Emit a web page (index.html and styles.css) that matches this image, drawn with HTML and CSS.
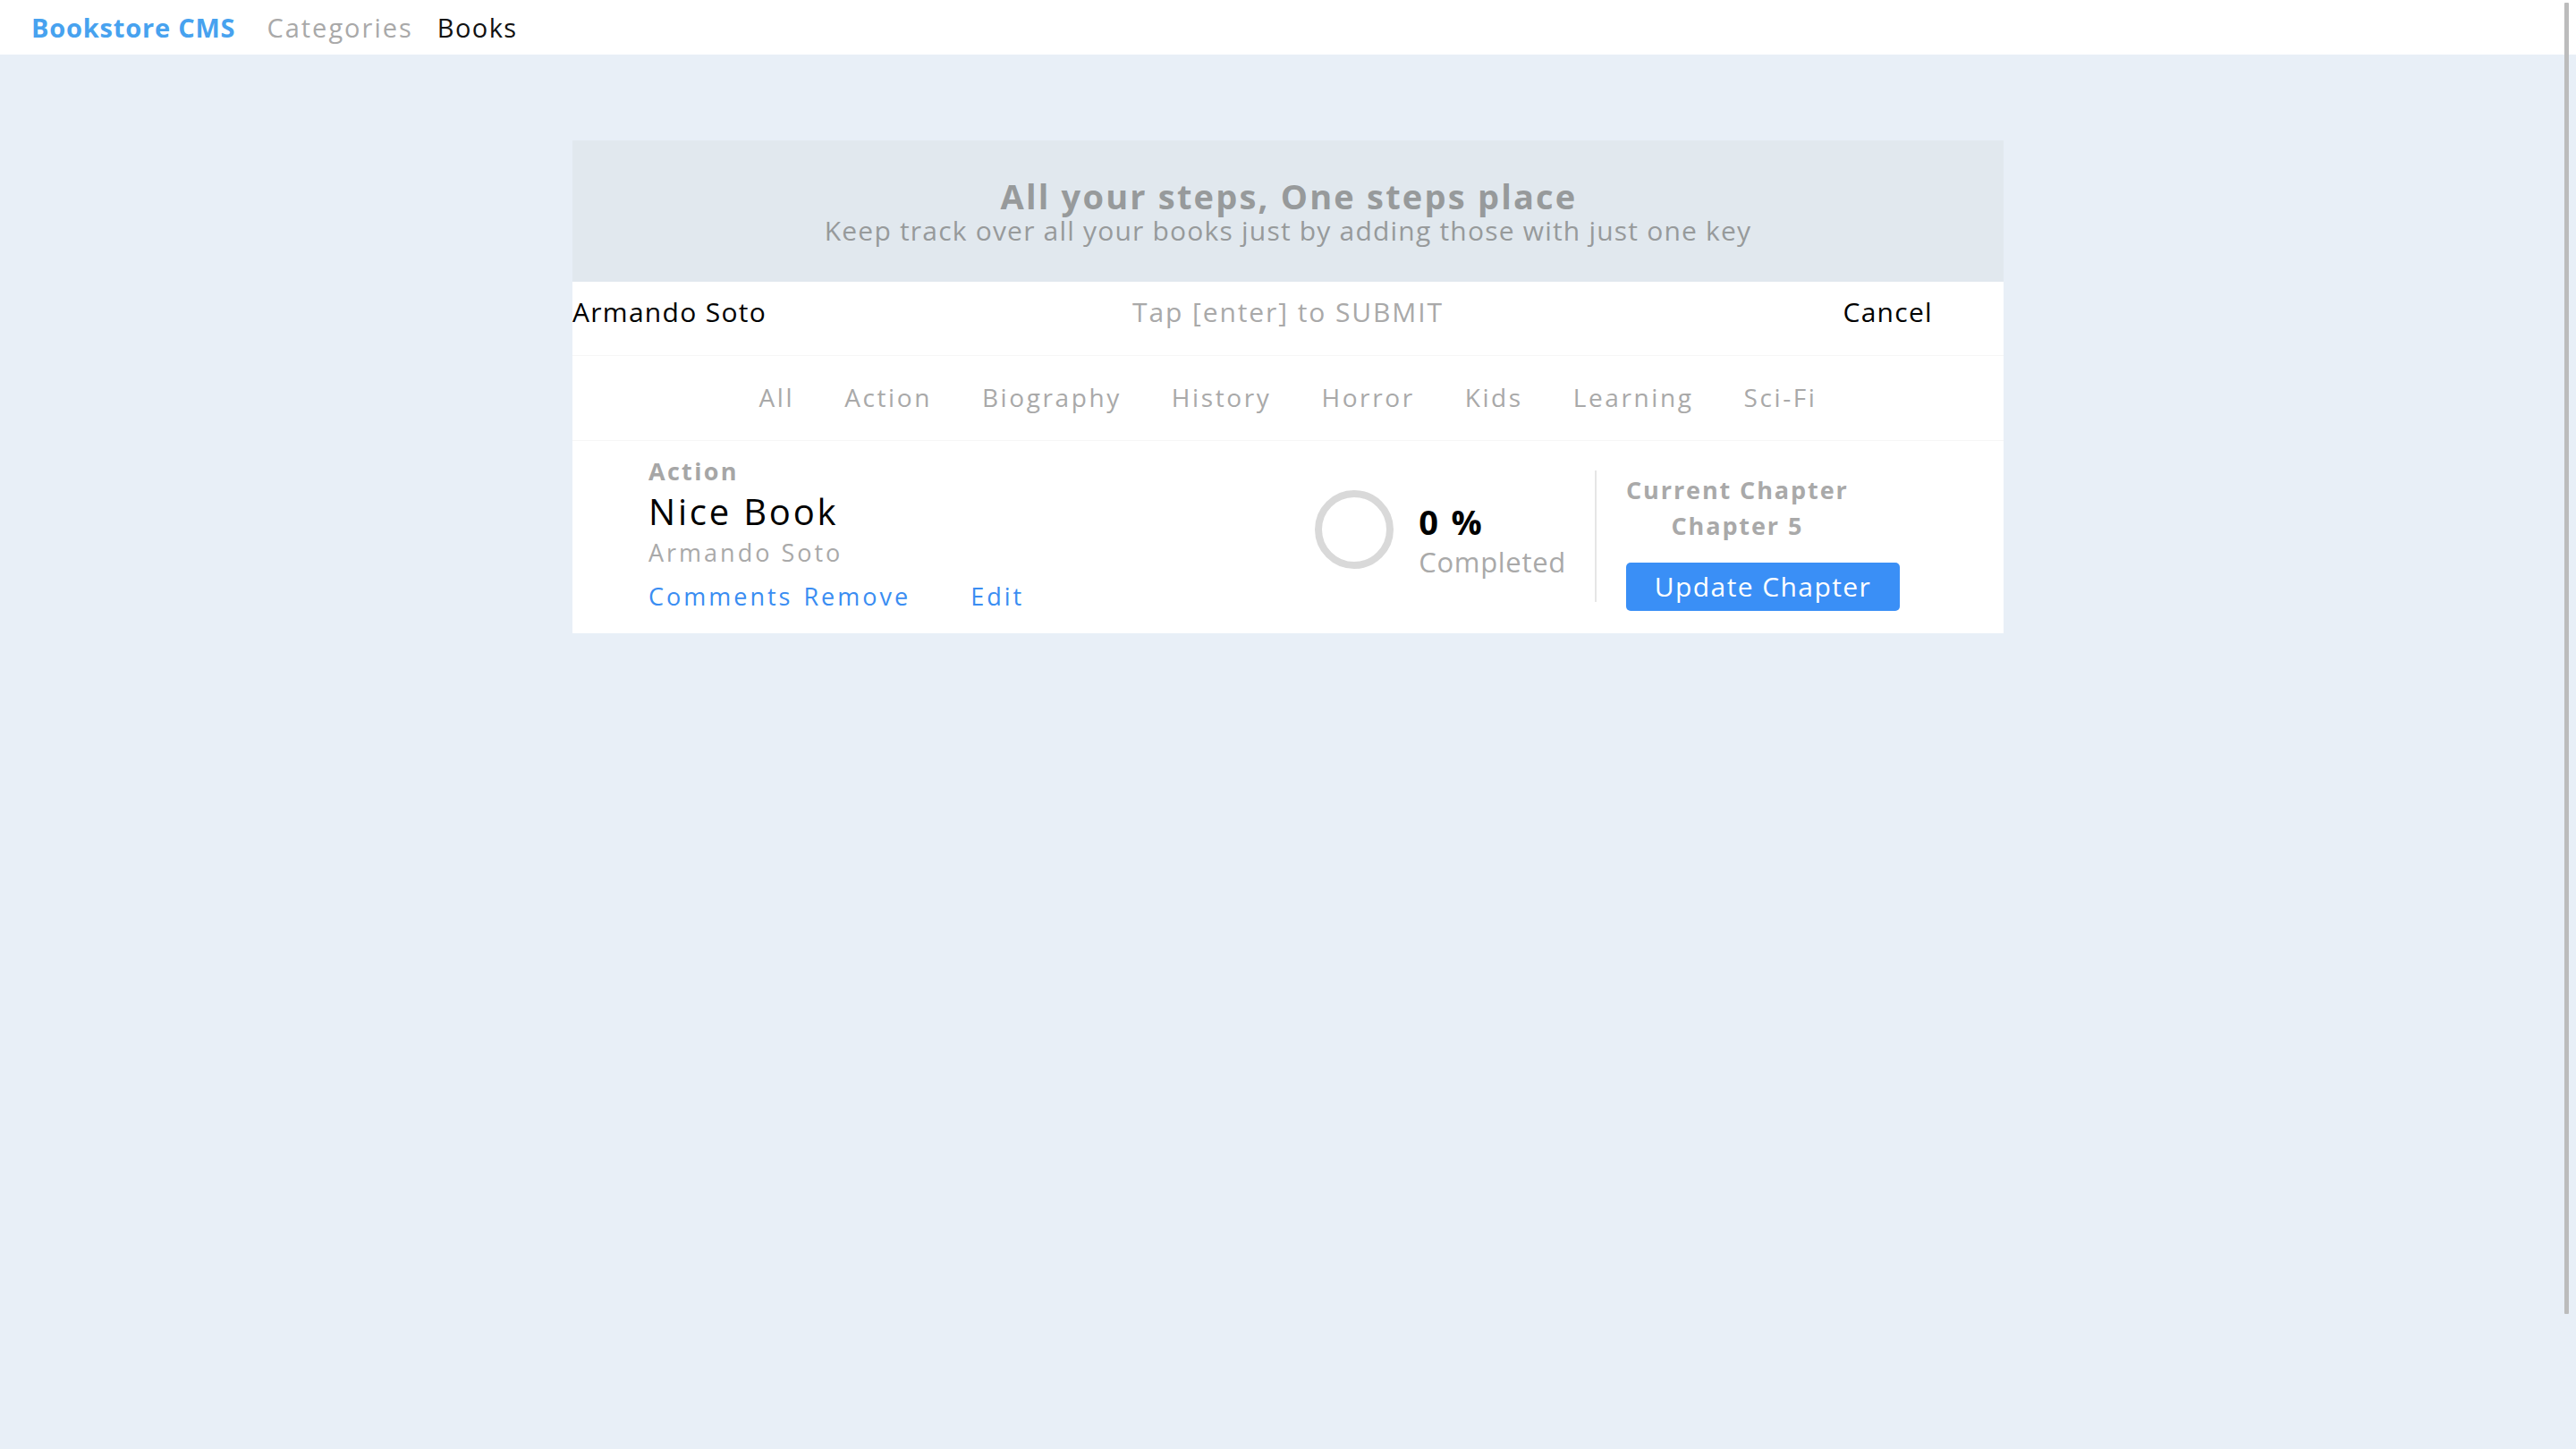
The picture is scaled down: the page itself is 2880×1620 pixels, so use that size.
FILE: index.html
```html
<!DOCTYPE html>
<html lang="en">
<head>
<meta charset="utf-8">
<title>Bookstore CMS</title>
<link rel="stylesheet" href="styles.css">
</head>
<body>
<nav class="nav">
  <span class="brand">Bookstore CMS</span>
  <a class="nav-link">Categories</a>
  <a class="nav-link active">Books</a>
</nav>
<main class="card">
  <header class="hero">
    <h1 class="hero-title">All your steps, One steps place</h1>
    <p class="hero-sub">Keep track over all your books just by adding those with just one key</p>
  </header>
  <form class="entry">
    <span class="entry-value">Armando Soto</span>
    <span class="entry-hint">Tap [enter] to SUBMIT</span>
    <span class="entry-cancel">Cancel</span>
  </form>
  <ul class="filters">
    <li>All</li>
    <li>Action</li>
    <li>Biography</li>
    <li>History</li>
    <li>Horror</li>
    <li>Kids</li>
    <li>Learning</li>
    <li>Sci-Fi</li>
  </ul>
  <section class="book">
    <div class="book-info">
      <div class="book-cat">Action</div>
      <div class="book-title">Nice Book</div>
      <div class="book-author">Armando Soto</div>
      <div class="book-links">
        <a class="link link-comments">Comments</a>
        <a class="link link-remove">Remove</a>
        <a class="link">Edit</a>
      </div>
    </div>
    <div class="progress">
      <div class="ring"></div>
      <div class="progress-text">
        <div class="percent">0 %</div>
        <div class="completed">Completed</div>
      </div>
    </div>
    <div class="divider"></div>
    <div class="chapter">
      <div class="chapter-labels">
        <div class="chapter-title">Current Chapter</div>
        <div class="chapter-name">Chapter 5</div>
      </div>
      <button class="update-btn" type="button">Update Chapter</button>
    </div>
  </section>
</main>
<div class="scroll-thumb"></div>
</body>
</html>
```

FILE: styles.css
```css
html, body {
  margin: 0;
  padding: 0;
}
body {
  background: #e8eff7;
  font-family: "Open Sans", "Noto Sans", sans-serif;
  min-height: 1620px;
  overflow: hidden;
}
.nav {
  height: 61px;
  background: #ffffff;
  display: flex;
  align-items: center;
  padding-left: 35px;
}
.brand {
  font-size: 29px;
  line-height: 29px;
  font-weight: 700;
  letter-spacing: 0.8px;
  color: #47a2ef;
  margin-right: 35px;
}
.nav-link {
  font-size: 29px;
  line-height: 29px;
  letter-spacing: 2px;
  color: #a9a9a9;
  margin-right: 27px;
}
.nav-link.active {
  color: #111111;
  letter-spacing: 1.4px;
}
.card {
  width: 1600px;
  margin: 96px auto 0;
  background: #ffffff;
}
.hero {
  height: 158px;
  background: #e1e8ee;
  display: flex;
  flex-direction: column;
  align-items: center;
  justify-content: center;
  gap: 5px;
}
.hero-title {
  margin: 0 0 0 2px;
  font-size: 38px;
  line-height: 38px;
  font-weight: 700;
  letter-spacing: 2.2px;
  color: #979a9b;
}
.hero-sub {
  margin: 0;
  font-size: 30px;
  line-height: 30px;
  letter-spacing: 1.2px;
  color: #979a9b;
}
.entry {
  margin: 0;
  display: grid;
  grid-template-columns: 1fr auto 1fr;
  padding: 19px 0 33px;
  border-bottom: 1px solid #f6f6f6;
  font-size: 30px;
  line-height: 30px;
  letter-spacing: 1.3px;
}
.entry-value {
  color: #000000;
}
.entry-hint {
  color: #a9a9a9;
  letter-spacing: 1.9px;
}
.entry-cancel {
  color: #000000;
  justify-self: end;
  margin-right: 79px;
}
.filters {
  list-style: none;
  margin: 0;
  padding: 32px 0 34px;
  display: flex;
  justify-content: center;
  gap: 56px;
  font-size: 28px;
  line-height: 28px;
  letter-spacing: 2.6px;
  color: #a9a9a9;
  border-bottom: 1px solid #f6f6f6;
}
.book {
  display: flex;
  align-items: flex-start;
  height: 215px;
  padding: 0 116px 0 85px;
}
.book-info {
  flex: 1;
  margin-top: 19px;
}
.book-cat {
  font-size: 27px;
  line-height: 30px;
  font-weight: 700;
  letter-spacing: 2.3px;
  color: #a6a6a6;
}
.book-title {
  font-size: 40px;
  line-height: 60px;
  letter-spacing: 2.8px;
  color: #000000;
}
.book-author {
  font-size: 27px;
  line-height: 32px;
  letter-spacing: 3px;
  color: #a9a9a9;
}
.book-links {
  font-size: 27px;
  line-height: 66px;
  letter-spacing: 3px;
  display: flex;
}
.link {
  color: #3a8df2;
}
.link-comments {
  margin-right: 12px;
}
.link-remove {
  margin-right: 67px;
}
.progress {
  display: flex;
  align-items: flex-start;
  margin-right: 32px;
}
.ring {
  width: 88px;
  height: 88px;
  box-sizing: border-box;
  border: 8px solid #d9d9d9;
  border-radius: 50%;
  margin-top: 55px;
  margin-right: 28px;
}
.progress-text {
  margin-top: 70px;
}
.percent {
  font-size: 38px;
  line-height: 40px;
  font-weight: 700;
  letter-spacing: 2.4px;
  color: #000000;
}
.completed {
  margin-top: 5px;
  font-size: 31px;
  line-height: 40px;
  letter-spacing: 0.7px;
  color: #a9a9a9;
}
.divider {
  width: 2px;
  height: 147px;
  background: #e6e6e6;
  margin-top: 33px;
}
.chapter {
  margin-left: 33px;
  margin-top: 35px;
  display: flex;
  flex-direction: column;
  align-items: flex-start;
}
.chapter-labels {
  display: flex;
  flex-direction: column;
  align-items: center;
}
.chapter-title, .chapter-name {
  font-size: 27px;
  line-height: 40px;
  font-weight: 700;
  letter-spacing: 1.9px;
  color: #a9a9a9;
}
.update-btn {
  margin-top: 21px;
  width: 306px;
  height: 54px;
  border: none;
  border-radius: 5px;
  background: #3a8ff6;
  color: #ffffff;
  font-family: inherit;
  font-size: 30px;
  line-height: 54px;
  letter-spacing: 1.4px;
  padding: 0;
}
.scroll-thumb {
  position: absolute;
  top: 3px;
  right: 8px;
  width: 5px;
  height: 1466px;
  background: #bcbcbc;
  border-radius: 1px;
}
```
